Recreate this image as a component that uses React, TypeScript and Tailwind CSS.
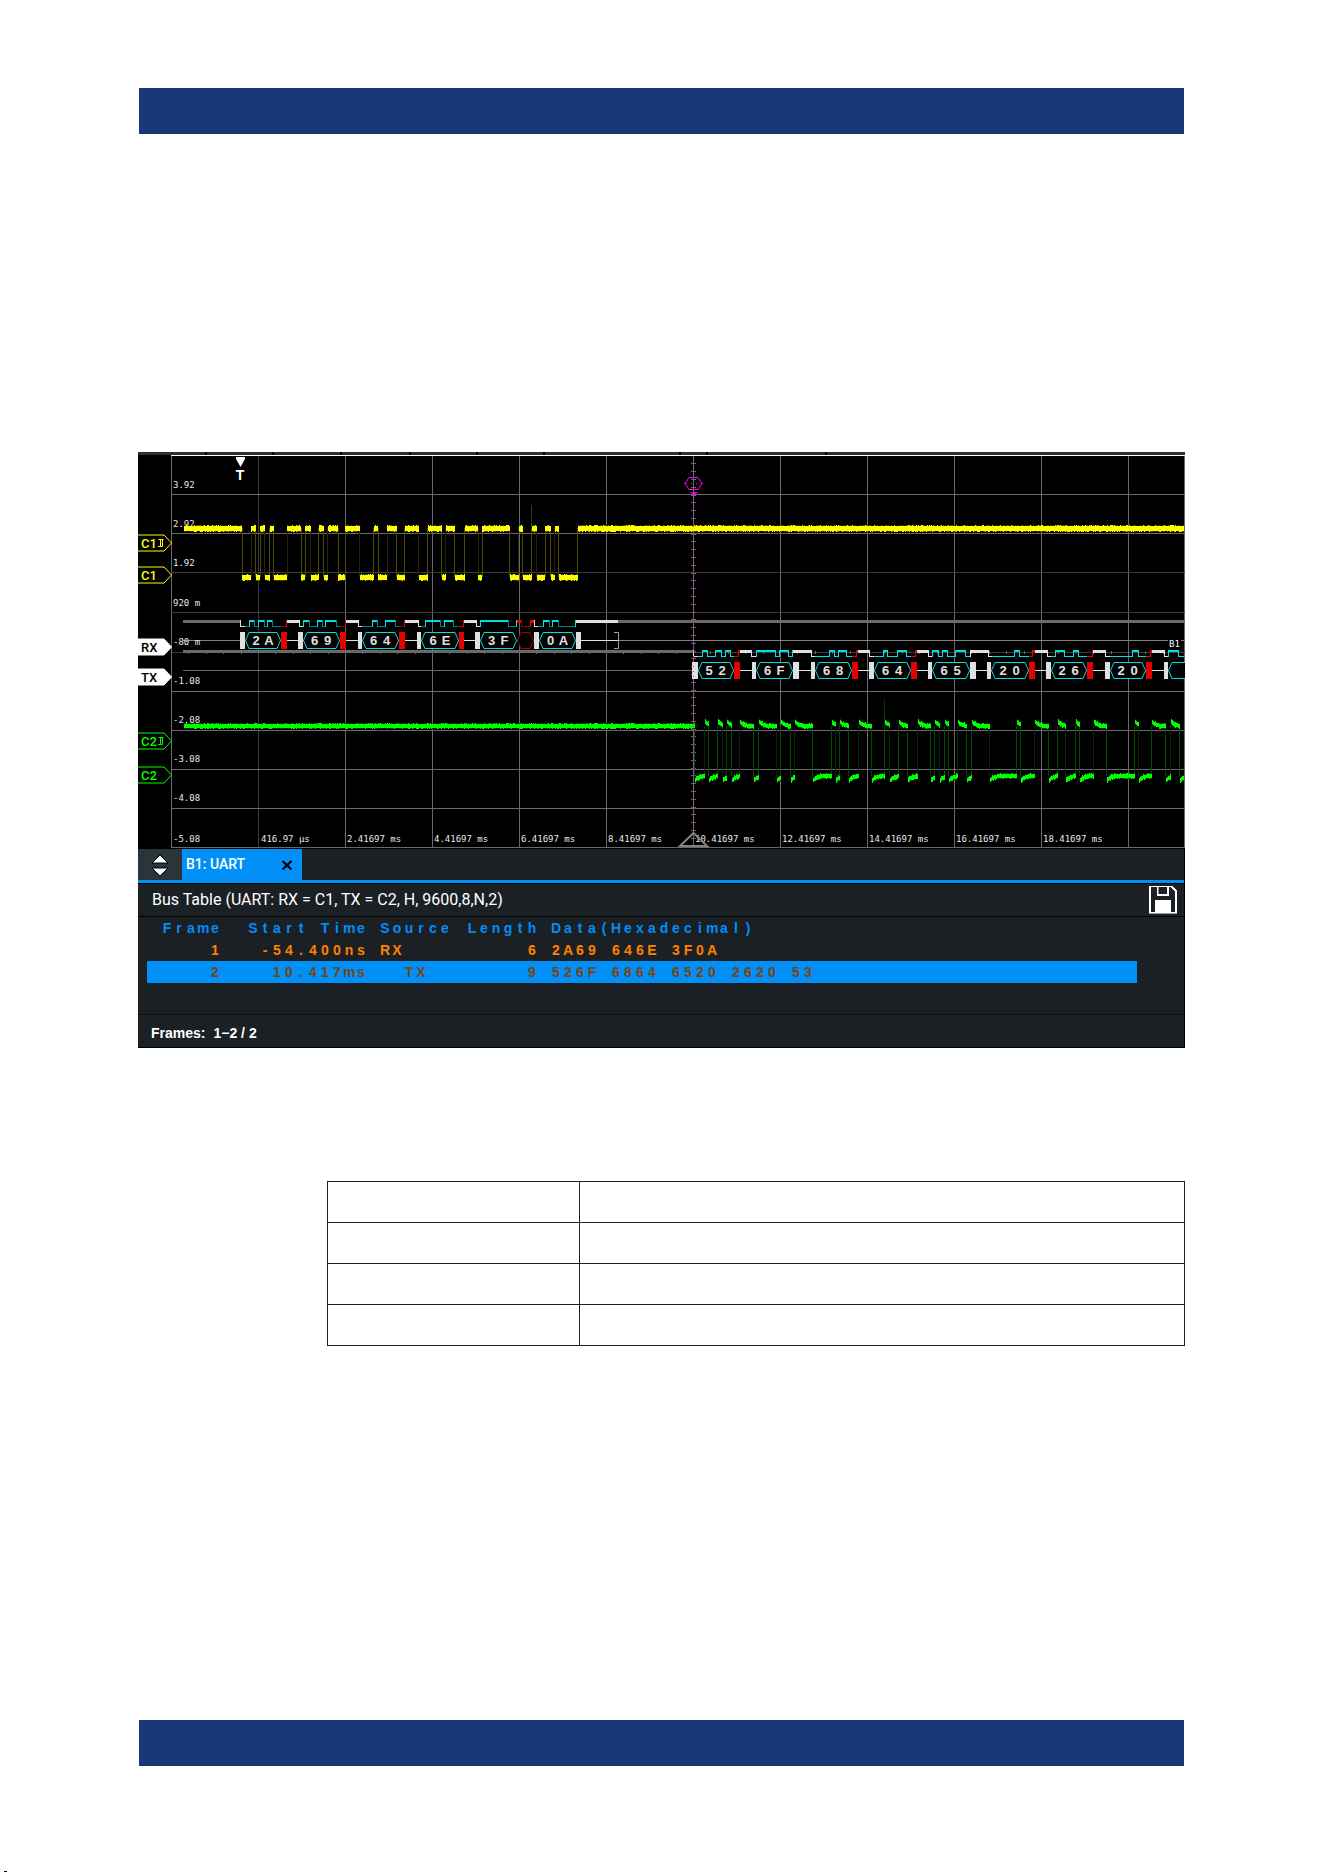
const YELLOW = "#ffff00";
const GREEN = "#00ff00";
const GRAY = "#6a686a";
const DIM = "#3a3a3a";
const CYAN = "#00e0e0";
const TEAL = "#008080";
const RED = "#e60000";
const WHITE = "#e0e0e0";

type Level = "H" | "L";
type Segment = [number, Level, string];
type Box = { kind: "block" | "hex"; x1: number; x2: number; color: string; text?: string };

const GRID_X = [171, 258, 345, 432, 519, 606, 693, 780, 867, 954, 1041, 1128, 1184];
const GRID_Y = [494, 533, 572, 612, 652, 691, 730, 769, 808, 847];

const VOLT_LABELS: [number, string][] = [
  [488, "3.92"],
  [527, "2.92"],
  [566, "1.92"],
  [606, "920 m"],
  [645, "-80 m"],
  [684, "-1.08"],
  [723, "-2.08"],
  [762, "-3.08"],
  [801, "-4.08"],
  [842, "-5.08"],
];

const TIME_LABELS: [number, string][] = [
  [261, "416.97 µs"],
  [347, "2.41697 ms"],
  [434, "4.41697 ms"],
  [521, "6.41697 ms"],
  [608, "8.41697 ms"],
  [695, "10.41697 ms"],
  [782, "12.41697 ms"],
  [869, "14.41697 ms"],
  [956, "16.41697 ms"],
  [1043, "18.41697 ms"],
];

// level changes, the signal starts high
const C1_EDGES = [
  242, 251, 255.5, 260, 264.5, 269.5, 273.5, 287, 301, 305, 310.5, 318.5, 323.5, 327.5, 338, 345,
  359.5, 373.5, 378, 387, 396.5, 404.5, 418.5, 427.5, 441.5, 445.5, 454.5, 464.5, 478, 482, 509.5,
  518.5, 522.5, 531.5, 536.5, 545, 550.5, 554.5, 558.5, 577.5,
];

const C2_EDGES = [
  694.5, 704.5, 708.5, 717.5, 722.5, 726.5, 731.5, 739.5, 753.5, 758.5, 776.5, 780.5, 790.5, 794.5,
  812.5, 831.5, 835.5, 839.5, 848.5, 858.5, 871.5, 884.5, 889.5, 898.5, 907.5, 917.5, 930.5, 934.5,
  939.5, 944.5, 948.5, 957.5, 966.5, 971.5, 989.5, 1016.5, 1020.5, 1034.5, 1048.5, 1057.5, 1065.5,
  1075.5, 1079.5, 1093.5, 1106.5, 1134.5, 1138.5, 1151.5, 1165.5, 1170.5, 1179.5,
];

const RX_LINE: Segment[] = [
  [183, "H", GRAY],
  [240, "L", WHITE],
  [245, "L", TEAL],
  [249, "H", CYAN],
  [254, "L", TEAL],
  [258, "H", CYAN],
  [264, "L", TEAL],
  [267, "H", CYAN],
  [272, "L", TEAL],
  [281, "L", "#900000"],
  [286, "H", RED],
  [287, "H", WHITE],
  [299, "L", WHITE],
  [303, "H", CYAN],
  [309, "L", TEAL],
  [317, "H", CYAN],
  [322, "L", TEAL],
  [325, "H", CYAN],
  [336, "L", TEAL],
  [340, "L", "#900000"],
  [345, "H", RED],
  [346, "H", WHITE],
  [358, "L", WHITE],
  [362, "L", TEAL],
  [372, "H", CYAN],
  [377, "L", TEAL],
  [385, "H", CYAN],
  [395, "L", TEAL],
  [399, "L", "#900000"],
  [404, "H", RED],
  [405, "H", WHITE],
  [418, "L", WHITE],
  [421, "L", TEAL],
  [425, "H", CYAN],
  [440, "L", TEAL],
  [444, "H", CYAN],
  [453, "L", TEAL],
  [458, "L", "#900000"],
  [463, "H", RED],
  [464, "H", WHITE],
  [476, "L", WHITE],
  [480, "H", CYAN],
  [508, "L", TEAL],
  [516, "H", CYAN],
  [517, "H", RED],
  [521, "L", "#900000"],
  [530, "H", RED],
  [534, "L", WHITE],
  [538, "L", TEAL],
  [543, "H", CYAN],
  [549, "L", TEAL],
  [552, "H", CYAN],
  [558, "L", TEAL],
  [575, "H", CYAN],
  [576, "H", WHITE],
  [618, "H", GRAY],
  [1184, "H", GRAY],
];

const TX_LINE: Segment[] = [
  [183, "H", GRAY],
  [693, "L", WHITE],
  [698, "L", CYAN],
  [702, "H", CYAN],
  [707, "L", CYAN],
  [715, "H", CYAN],
  [721, "L", CYAN],
  [725, "H", CYAN],
  [730, "L", CYAN],
  [734, "L", RED],
  [738, "H", RED],
  [740, "H", WHITE],
  [751, "L", WHITE],
  [756, "H", CYAN],
  [775, "L", CYAN],
  [779, "H", CYAN],
  [788, "L", CYAN],
  [792, "H", CYAN],
  [793, "H", WHITE],
  [811, "L", WHITE],
  [815, "L", CYAN],
  [829, "H", CYAN],
  [834, "L", CYAN],
  [838, "H", CYAN],
  [846, "L", CYAN],
  [852, "L", RED],
  [856, "H", RED],
  [858, "H", WHITE],
  [869, "L", WHITE],
  [874, "L", CYAN],
  [883, "H", CYAN],
  [887, "L", CYAN],
  [897, "H", CYAN],
  [906, "L", CYAN],
  [911, "L", RED],
  [915, "H", RED],
  [917, "H", WHITE],
  [928, "L", WHITE],
  [932, "H", CYAN],
  [938, "L", CYAN],
  [942, "H", CYAN],
  [947, "L", CYAN],
  [955, "H", CYAN],
  [965, "L", CYAN],
  [970, "H", WHITE],
  [988, "L", WHITE],
  [992, "L", CYAN],
  [1014, "H", CYAN],
  [1019, "L", CYAN],
  [1029, "L", RED],
  [1032, "H", RED],
  [1035, "H", WHITE],
  [1047, "L", WHITE],
  [1051, "L", CYAN],
  [1055, "H", CYAN],
  [1064, "L", CYAN],
  [1073, "H", CYAN],
  [1078, "L", CYAN],
  [1087, "L", RED],
  [1092, "H", RED],
  [1093, "H", WHITE],
  [1105, "L", WHITE],
  [1110, "L", CYAN],
  [1132, "H", CYAN],
  [1138, "L", CYAN],
  [1146, "L", RED],
  [1150, "H", RED],
  [1152, "H", WHITE],
  [1164, "L", WHITE],
  [1168, "H", CYAN],
  [1178, "L", CYAN],
  [1184, "L", CYAN],
];

const block = (x1: number, x2: number, color: string): Box => ({ kind: "block", x1, x2, color });
const hex = (x1: number, x2: number, text?: string, color = CYAN): Box => ({ kind: "hex", x1, x2, color, text });

const RX_BOXES: Box[] = [
  block(240, 245, WHITE), hex(245, 281, "2A"), block(281, 287, RED),
  block(298, 303, WHITE), hex(303, 340, "69"), block(340, 346, RED),
  block(358, 362, WHITE), hex(362, 399, "64"), block(399, 405, RED),
  block(417, 421, WHITE), hex(421, 459, "6E"), block(459, 464, RED),
  block(475, 480, WHITE), hex(480, 517, "3F"), hex(517, 534, undefined, "#a00000"),
  block(534, 539, WHITE), hex(539, 576, "0A"), block(576, 581, WHITE),
];

const TX_BOXES: Box[] = [
  block(692, 698, WHITE), hex(698, 734, "52"), block(734, 740, RED),
  block(752, 756, WHITE), hex(756, 793, "6F"), block(793, 799, WHITE),
  block(811, 815, WHITE), hex(815, 852, "68"), block(852, 858, RED),
  block(869, 874, WHITE), hex(874, 911, "64"), block(911, 917, RED),
  block(928, 932, WHITE), hex(932, 970, "65"), block(970, 976, WHITE),
  block(987, 991, WHITE), hex(991, 1029, "20"), block(1029, 1035, RED),
  block(1046, 1051, WHITE), hex(1051, 1087, "26"), block(1087, 1093, RED),
  block(1105, 1110, WHITE), hex(1110, 1146, "20"), block(1146, 1152, RED),
  block(1164, 1168, WHITE), hex(1168, 1205),
];

// cheap repeatable noise, 0..1
const noise = (n: number) => {
  const v = Math.sin(n * 12.9898) * 43758.5453;
  return v - Math.floor(v);
};

type TraceProps = {
  edges: number[];
  high: number;
  low: number;
  below: number;
  decay: number;
  color: string;
  dim: string;
  faint: string;
};

const Trace = ({ edges, high, low, below, decay, color, dim, faint }: TraceProps) => {
  let core = "";
  let fuzz = "";
  let idx = 0;
  for (let x = 184; x < 1184; x++) {
    while (idx < edges.length && edges[idx] <= x) idx++;
    const isHigh = idx % 2 === 0;
    const since = idx === 0 ? 100 : x - edges[idx - 1];
    const shift = decay * Math.exp(-since / 3) * (isHigh ? -1 : 1);
    const y = Math.round((isHigh ? high : low) + shift);
    const up = noise(x) > 0.8 ? 1 : 0;
    const down = noise(x + 500) > 0.7 ? 1 : 0;
    core += `M${x + 0.5} ${y - 2 - up}V${y + below + down}`;
    fuzz += `M${x + 0.5} ${y - 2 - (noise(x * 3) > 0.5 ? 1 : 0)}V${y + below + (noise(x * 7) > 0.4 ? 1 : 0)}`;
  }
  return (
    <g shapeRendering="crispEdges">
      {edges.map((x, i) => (
        <path
          key={x}
          d={`M${Math.floor(x) + 0.5} ${high}V${low}`}
          stroke={i % 3 === 1 ? faint : dim}
        />
      ))}
      <path d={fuzz} stroke={dim} />
      <path d={core} stroke={color} />
    </g>
  );
};

const BitLine = ({ segments, top }: { segments: Segment[]; top: number }) => (
  <g shapeRendering="crispEdges">
    {segments.slice(0, -1).map(([x, level, color], i) => {
      const end = segments[i + 1][0];
      const changed = i > 0 && segments[i - 1][1] !== level;
      const edge = level === "L" && segments[i - 1]?.[2] === GRAY ? WHITE : color;
      return (
        <g key={x}>
          {level === "H" ? (
            <rect x={x} y={top} width={end - x} height={color === CYAN ? 2 : 3} fill={color} />
          ) : (
            <rect x={x} y={top + 6} width={end - x} height={1} fill={color} />
          )}
          {changed && <rect x={x} y={top} width={1} height={7} fill={edge} />}
        </g>
      );
    })}
  </g>
);

const BusBoxes = ({ boxes, top }: { boxes: Box[]; top: number }) => (
  <g>
    {boxes.map(({ kind, x1, x2, color, text }) =>
      kind === "block" ? (
        <rect key={x1} x={x1} y={top} width={x2 - x1} height={17} fill={color} />
      ) : (
        <g key={x1}>
          <path
            d={`M${x1 + 4} ${top + 0.5}H${x2 - 4}L${x2 - 0.5} ${top + 8.5}L${x2 - 4} ${top + 16.5}H${x1 + 4}L${x1 + 0.5} ${top + 8.5}Z`}
            fill="#000"
            stroke={color}
          />
          {text && (
            <text
              x={`${(x1 + x2) / 2 - 7} ${(x1 + x2) / 2 + 6}`}
              y={top + 13}
              textAnchor="middle"
              fill={WHITE}
              className="font-['Liberation_Sans'] text-[13px] font-bold"
            >
              {text}
            </text>
          )}
        </g>
      )
    )}
  </g>
);

type TagProps = { y: number; label: string; color: string; solid?: boolean; pulse?: boolean };

const Tag = ({ y, label, color, solid, pulse }: TagProps) => (
  <g>
    <path
      d={`M138 ${y - 8}H164L171.5 ${y}L164 ${y + 8}H138`}
      fill={solid ? color : "#000"}
      stroke={color}
    />
    <text
      x="141"
      y={y + 5}
      fill={solid ? "#000" : color}
      className="font-[Roboto,sans-serif] text-[13px] font-medium"
    >
      {label}
    </text>
    {pulse && <path d={`M158 ${y + 3.5}h2.500v-7h3M158.500 ${y - 3.5}h2M160.500 ${y + 3.5}h2v-7`} fill="none" stroke={color} />}
  </g>
);

const Scope = () => (
  <svg viewBox="138 452 1047 396" className="block h-auto w-full bg-black" role="img" aria-label="UART waveforms">
    <g shapeRendering="crispEdges">
      <rect x="138" y="452" width="1047" height="3" fill="#263036" />
      <path d="M205.500 452v3M273 452v3M341 452v3M409.500 452v3M477 452v3M544 452v3M680 452v3M707 452v3M826 452v3" stroke="#000" strokeWidth="2" />
      <rect x="171" y="455" width="1014" height="1" fill="#fff" />
      {GRID_X.map((x) => (
        <rect key={x} x={x} y={456} width={1} height={392} fill={x === 258 ? DIM : GRAY} />
      ))}
      {GRID_Y.map((y) => (
        <rect key={y} x={171} y={y} width={1014} height={1} fill={y === 572 || y === 612 || y === 652 ? DIM : GRAY} />
      ))}
      {Array.from({ length: 49 }, (_, i) => (
        <rect key={i} x={691} y={463 + i * 8 - Math.floor(i / 5)} width={5} height={1} fill={GRAY} />
      ))}
      {Array.from({ length: 58 }, (_, i) => (
        <rect key={i} x={171 + Math.round(i * 17.4)} y={651} width={1} height={3} fill={GRAY} />
      ))}
      <rect x="183" y="640" width="1001" height="1" fill="#808080" />
      <rect x="183" y="670" width="1001" height="1" fill={GRAY} />
      <rect x="245" y="640" width="373" height="1" fill={WHITE} />
      <rect x="698" y="670" width="486" height="1" fill={WHITE} />
    </g>

    <g fill="#e8e8e8" className="font-['DejaVu_Sans_Mono',monospace] text-[9px]">
      {VOLT_LABELS.map(([y, label]) => (
        <text key={label} x="173" y={y}>{label}</text>
      ))}
      {TIME_LABELS.map(([x, label]) => (
        <text key={label} x={x} y="842">{label}</text>
      ))}
    </g>

    <Trace edges={C1_EDGES} high={528} low={577} below={3} decay={0} color={YELLOW} dim="#4c4c00" faint="#262600" />
    <path d="M531.500 505v22" stroke="#3c3c00" />
    <Trace edges={C2_EDGES} high={726} low={776} below={2} decay={5} color={GREEN} dim="#004c00" faint="#002c00" />
    <path d="M884.500 699v24" stroke="#003800" />

    <BitLine segments={RX_LINE} top={620} />
    <BusBoxes boxes={RX_BOXES} top={632} />
    <path d="M614 632.500h4.500v16h-4.500" fill="none" stroke="#a0a0a0" />
    <BitLine segments={TX_LINE} top={650} />
    <BusBoxes boxes={TX_BOXES} top={662} />
    <rect x="1168" y="639" width="13" height="9" fill="#000" />
    <text x="1169" y="647" fill="#fff" className="font-['DejaVu_Sans_Mono',monospace] text-[9px]">B1</text>

    <path d="M236 457h9v2l-4.500 8l-4.500 -8z" fill="#fff" />
    <text x="240" y="480" textAnchor="middle" fill="#fff" className="font-['Liberation_Sans'] text-[14px] font-bold">T</text>

    <path d="M693.500 496V847" stroke="#ff00ff" strokeDasharray="1 4" />
    <path d="M689 477.500h9l4 6l-4 6h-9l-4 -6z" fill="none" stroke="#ff00ff" />
    <path d="M684 483.500h2M691 483.500h1M696 483.500h1M701 483.500h2" stroke="#ff00ff" />
    <path d="M690 492h8l-3 2v1h-2v-1z" fill="#ff00ff" />
    <path d="M680 846L693.500 833L707 846Z" fill="none" stroke="#808080" strokeWidth="2" />

    <Tag y={543} label="C1" color={YELLOW} pulse />
    <Tag y={575} label="C1" color={YELLOW} />
    <Tag y={647} label="RX" color="#ffffff" solid />
    <Tag y={677} label="TX" color="#ffffff" solid />
    <Tag y={741} label="C2" color={GREEN} pulse />
    <Tag y={775} label="C2" color={GREEN} />
  </svg>
);

// one fixed cell per character, like the instrument's own text grid
const Cells = ({ text }: { text: string }) => (
  <>
    {text.split("").map((char, i) => (
      <span key={i} className="inline-block w-3 text-center">{char === " " ? "\u00a0" : char}</span>
    ))}
  </>
);

const FRAMES = [
  { frame: "1", start: "-54.400ns", source: "RX", length: "6", data: "2A69 646E 3F0A", selected: false },
  { frame: "2", start: "10.417ms", source: "  TX", length: "9", data: "526F 6864 6520 2620 53", selected: true },
];

const BusTable = () => (
  <table className="w-[990px] table-fixed border-collapse font-['Liberation_Sans',sans-serif] text-[14px] leading-[22px] whitespace-nowrap">
    <colgroup>
      <col className="w-[74px]" />
      <col className="w-[146px]" />
      <col className="w-[97px]" />
      <col className="w-[74px]" />
      <col />
    </colgroup>
    <thead>
      <tr className="h-[22px] text-[#008ef8]">
        <th className="p-0 text-right"><Cells text="Frame" /></th>
        <th className="p-0 text-right"><Cells text="Start Time" /></th>
        <th className="p-0 pl-3 text-left"><Cells text="Source" /></th>
        <th className="p-0 text-right"><Cells text="Length" /></th>
        <th className="p-0 pl-3 text-left"><Cells text="Data(Hexadecimal)" /></th>
      </tr>
    </thead>
    <tbody>
      {FRAMES.map((row) => (
        <tr
          key={row.frame}
          className={row.selected ? "h-[22px] bg-[#0090f8] font-bold text-[#7a4410]" : "h-[22px] font-bold text-[#ff8000]"}
        >
          <td className="p-0 text-right"><Cells text={row.frame} /></td>
          <td className="p-0 text-right"><Cells text={row.start} /></td>
          <td className="p-0 pl-3"><Cells text={row.source} /></td>
          <td className="p-0 text-right"><Cells text={row.length} /></td>
          <td className="p-0 pl-3"><Cells text={row.data} /></td>
        </tr>
      ))}
    </tbody>
  </table>
);

const SaveIcon = () => (
  <svg width="28" height="28" viewBox="0 0 28 28" shapeRendering="crispEdges">
    <path d="M0 0H23L28 5V28H0Z" fill="#fff" />
    <path d="M2 1H8V10H20V1H22L26 6V26H22V14H6V26H2Z" fill="#1a2023" />
    <rect x="10" y="1" width="8" height="7" fill="#1a2023" />
    <rect x="9" y="1" width="1" height="7" fill="#888" />
    <rect y="27" width="28" height="1" fill="#999" />
  </svg>
);

const BusPanel = () => (
  <div className="border-r border-b border-black bg-[#1a2023] text-white">
    <div className="flex h-8 border-t border-black">
      <button aria-label="Resize panel" className="flex w-11 items-center justify-center bg-[#2a343a]">
        <svg width="18" height="22" viewBox="0 0 18 22">
          <path d="M9 1L17 9H1Z M1 14H17L9 22Z" fill="#fff" stroke="#000" />
        </svg>
      </button>
      <div className="flex w-[120px] items-center justify-between bg-[#0090f8] pr-[9px] pl-1">
        <span className="font-[Roboto,sans-serif] text-[14px] font-medium">B1: UART</span>
        <button aria-label="Close tab">
          <svg className="block" width="12" height="12" viewBox="0 0 12 12">
            <path d="M1.500 2L10.500 10.500M10.500 2L1.500 10.500" stroke="#000" strokeWidth="2.200" />
          </svg>
        </button>
      </div>
    </div>
    <div className="h-1 border-b border-black bg-[#0090f8]" />
    <div className="flex h-[33px] items-center justify-between border-b border-black pr-[7px] pl-[14px]">
      <h2 className="font-[Roboto,sans-serif] text-[16px]">
        Bus Table (UART: RX = C1, TX = C2, H, 9600,8,N,2)
      </h2>
      <button aria-label="Save table"><SaveIcon /></button>
    </div>
    <div className="h-[98px] border-b border-[#0c1012] pl-[9px]">
      <BusTable />
    </div>
    <div className="flex h-8 items-center gap-2 pt-1 pl-[13px] font-['Liberation_Sans',sans-serif] text-[14px] font-bold">
      <span>Frames:</span>
      <span>1−2 / 2</span>
    </div>
  </div>
);

const PropertyTable = () => (
  <table className="w-full table-fixed border-collapse">
    <colgroup>
      <col className="w-[252px]" />
      <col />
    </colgroup>
    <tbody>
      {[0, 1, 2, 3].map((row) => (
        <tr key={row} className="h-[41px]">
          <td className="border border-[#221f20]" />
          <td className="border border-[#221f20]" />
        </tr>
      ))}
    </tbody>
  </table>
);

export default function App() {
  return (
    <div className="bg-white">
      <div className="pt-[88px] pr-[139px] pl-[138px]">
        <header className="mr-px ml-px h-[46px] bg-[#183878]" />
        <main className="pt-[318px]">
          <Scope />
          <BusPanel />
          <div className="pt-[133px] pl-[189px]">
            <PropertyTable />
          </div>
        </main>
        <footer className="mt-[374px] mr-px ml-px h-[46px] bg-[#183878]" />
      </div>
      <div className="mt-[105px] ml-1 h-px w-[3px] bg-black" />
    </div>
  );
}
